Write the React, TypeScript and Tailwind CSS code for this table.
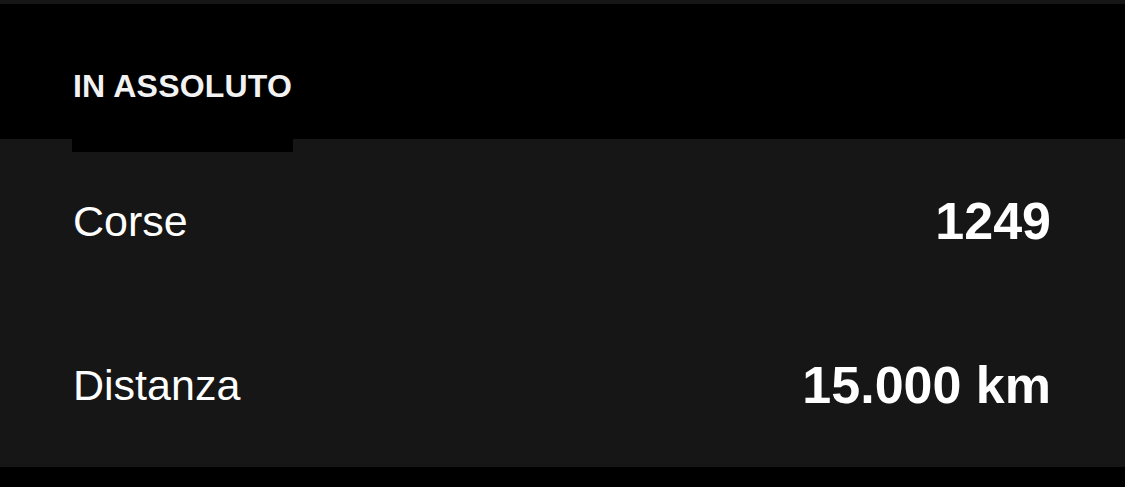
const rows = [
  { label: "Corse", value: "1249" },
  { label: "Distanza", value: "15.000 km" },
];

export default function App() {
  return (
    <div
      className="min-h-[487px] w-full bg-black text-white"
      style={{ fontFamily: '"Liberation Sans", Arial, sans-serif' }}
    >
      <div className="h-[4px] bg-[#161616]" />
      <div className="flex h-[135px] items-end bg-black px-[72px]">
        <div className="relative z-10 -mb-[13px] bg-black pb-[48px]">
          <p className="px-px text-[32px] font-bold leading-[36px] tracking-[0.2px] text-[#f2f2f2]">
            IN ASSOLUTO
          </p>
        </div>
      </div>
      <section className="bg-[#161616] px-[72px]">
        {rows.map((row) => (
          <div className="flex h-[164px] items-center justify-between" key={row.label}>
            <span className="pl-px text-[43px] leading-none">{row.label}</span>
            <span className="pr-[2px] text-[52px] font-bold leading-none">{row.value}</span>
          </div>
        ))}
      </section>
    </div>
  );
}
